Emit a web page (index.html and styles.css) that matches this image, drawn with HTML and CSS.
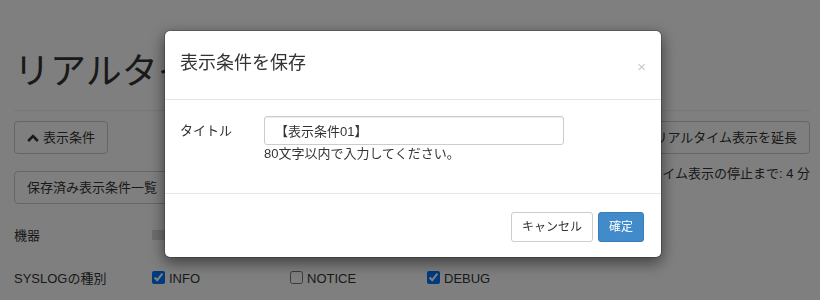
FILE: index.html
```html
<!DOCTYPE html>
<html lang="ja">
  <head>
    <meta charset="utf-8" />
    <title>リアルタイム表示</title>
    <link rel="stylesheet" href="styles.css">
  </head>
  <body>
    <div class="page">
      <div class="page-header">
        <h1>リアルタイム表示</h1>
      </div>

      <div class="toolbar">
        <div class="toolbar-left">
          <button class="btn" type="button">
            <svg class="chevron" width="12" height="12" viewBox="0 0 12 12">
              <path d="M1.2 9 L6 4.2 L10.8 9" fill="none" stroke="#333" stroke-width="2.6" />
            </svg>表示条件
          </button>
          <button class="btn" type="button">保存済み表示条件一覧</button>
        </div>
        <div class="toolbar-right">
          <button class="btn" type="button">リアルタイム表示を延長</button>
          <p class="remaining">リアルタイム表示の停止まで: 4 分</p>
        </div>
      </div>

      <div class="filter-row filter-device">
        <span class="filter-label">機器</span>
        <span class="device-select"></span>
      </div>

      <div class="filter-row filter-level">
        <span class="filter-label">SYSLOGの種別</span>
        <label class="check"><input type="checkbox" checked />INFO</label>
        <label class="check"><input type="checkbox" />NOTICE</label>
        <label class="check"><input type="checkbox" checked />DEBUG</label>
      </div>
    </div>

    <div class="backdrop">
      <div class="modal">
        <div class="modal-header">
          <h4 class="modal-title">表示条件を保存</h4>
          <button class="close" type="button">×</button>
        </div>
        <div class="modal-body">
          <div class="form-group">
            <label class="form-label" for="condition_title">タイトル</label>
            <div class="form-field">
              <input id="condition_title" type="text" value="【表示条件01】" />
              <p class="help">80文字以内で入力してください。</p>
            </div>
          </div>
        </div>
        <div class="modal-footer">
          <button class="btn btn-sm" type="button">キャンセル</button>
          <button class="btn btn-sm btn-primary" type="button">確定</button>
        </div>
      </div>
    </div>
  </body>
</html>
```

FILE: styles.css
```css
body {
  margin: 0;
  font-family: "Liberation Sans", "Noto Sans CJK JP", sans-serif;
  font-size: 13px;
  line-height: 19px;
  color: #333;
  background-color: #fff;
}

.page {
  padding: 0 10px 0 14px;
}

.page-header {
  padding-top: 52px;
  padding-bottom: 18px;
  border-bottom: 1px solid #eee;
  margin-bottom: 10px;
}

.page-header h1 {
  margin: 0;
  font-size: 36px;
  line-height: 40px;
  font-weight: normal;
  white-space: nowrap;
}

.btn {
  display: inline-flex;
  align-items: center;
  padding: 6px 12px;
  font-family: inherit;
  font-size: 13px;
  line-height: 19px;
  color: #333;
  background-color: #fff;
  border: 1px solid #ccc;
  border-radius: 4px;
  white-space: nowrap;
}

.chevron {
  margin-right: 4px;
}

.toolbar {
  display: flex;
  justify-content: space-between;
}

.toolbar-left {
  display: flex;
  flex-direction: column;
  align-items: flex-start;
  gap: 17px;
}

.toolbar-right {
  display: flex;
  flex-direction: column;
  align-items: flex-end;
}

.remaining {
  margin: 10px 0 0;
  line-height: 20px;
}

.filter-row {
  display: grid;
  grid-template-columns: 134px 138px 137px auto;
  align-items: center;
  height: 20px;
}

.filter-device {
  margin-top: 21px;
}

.filter-level {
  margin-top: 23px;
}

.device-select {
  display: block;
  width: 20px;
  height: 10px;
  margin-left: 4px;
  background-color: #dcdcdc;
}

.check {
  display: flex;
  align-items: center;
}

.check input {
  margin: 0 4px 2px 4px;
  width: 13px;
  height: 13px;
}

/* Modal */
.backdrop {
  position: fixed;
  top: 0;
  left: 0;
  right: 0;
  bottom: 0;
  background-color: rgba(0, 0, 0, 0.5);
}

.modal {
  width: 498px;
  box-sizing: border-box;
  margin: 30px 0 0 164px;
  background-color: #fff;
  background-clip: padding-box;
  border: 1px solid rgba(0, 0, 0, 0.2);
  border-radius: 6px;
  box-shadow: 0 5px 15px rgba(0, 0, 0, 0.5);
}

.modal-header {
  display: flex;
  justify-content: space-between;
  align-items: center;
  padding: 19px 15px 23px;
  border-bottom: 1px solid #e5e5e5;
}

.modal-title {
  margin: 0;
  font-size: 18px;
  line-height: 26px;
  font-weight: normal;
}

.close {
  margin-top: 6px;
  padding: 0;
  border: 0;
  background: none;
  font-family: "Liberation Sans", sans-serif;
  font-size: 15px;
  line-height: 1;
  color: #c8c8c8;
}

.modal-body {
  padding: 16px 15px 15px;
}

.form-group {
  display: flex;
  margin-bottom: 15px;
}

.form-label {
  width: 84px;
  line-height: 29px;
}

#condition_title {
  display: block;
  width: 300px;
  height: 29px;
  box-sizing: border-box;
  padding: 0 10px;
  font-family: inherit;
  font-size: 13px;
  color: #333;
  border: 1px solid #ccc;
  border-radius: 3px;
  box-shadow: inset 0 1px 1px rgba(0, 0, 0, 0.075);
}

.help {
  margin: 0;
  line-height: 18px;
}

.modal-footer {
  display: flex;
  justify-content: flex-end;
  gap: 5px;
  padding: 18px 17px 15px 15px;
  border-top: 1px solid #e5e5e5;
}

.btn-sm {
  height: 30px;
  padding: 0 10px;
  font-size: 12px;
  line-height: 28px;
  border-radius: 3px;
}

.btn-primary {
  color: #fff;
  background-color: #428bca;
  border-color: #357ebd;
}
```
